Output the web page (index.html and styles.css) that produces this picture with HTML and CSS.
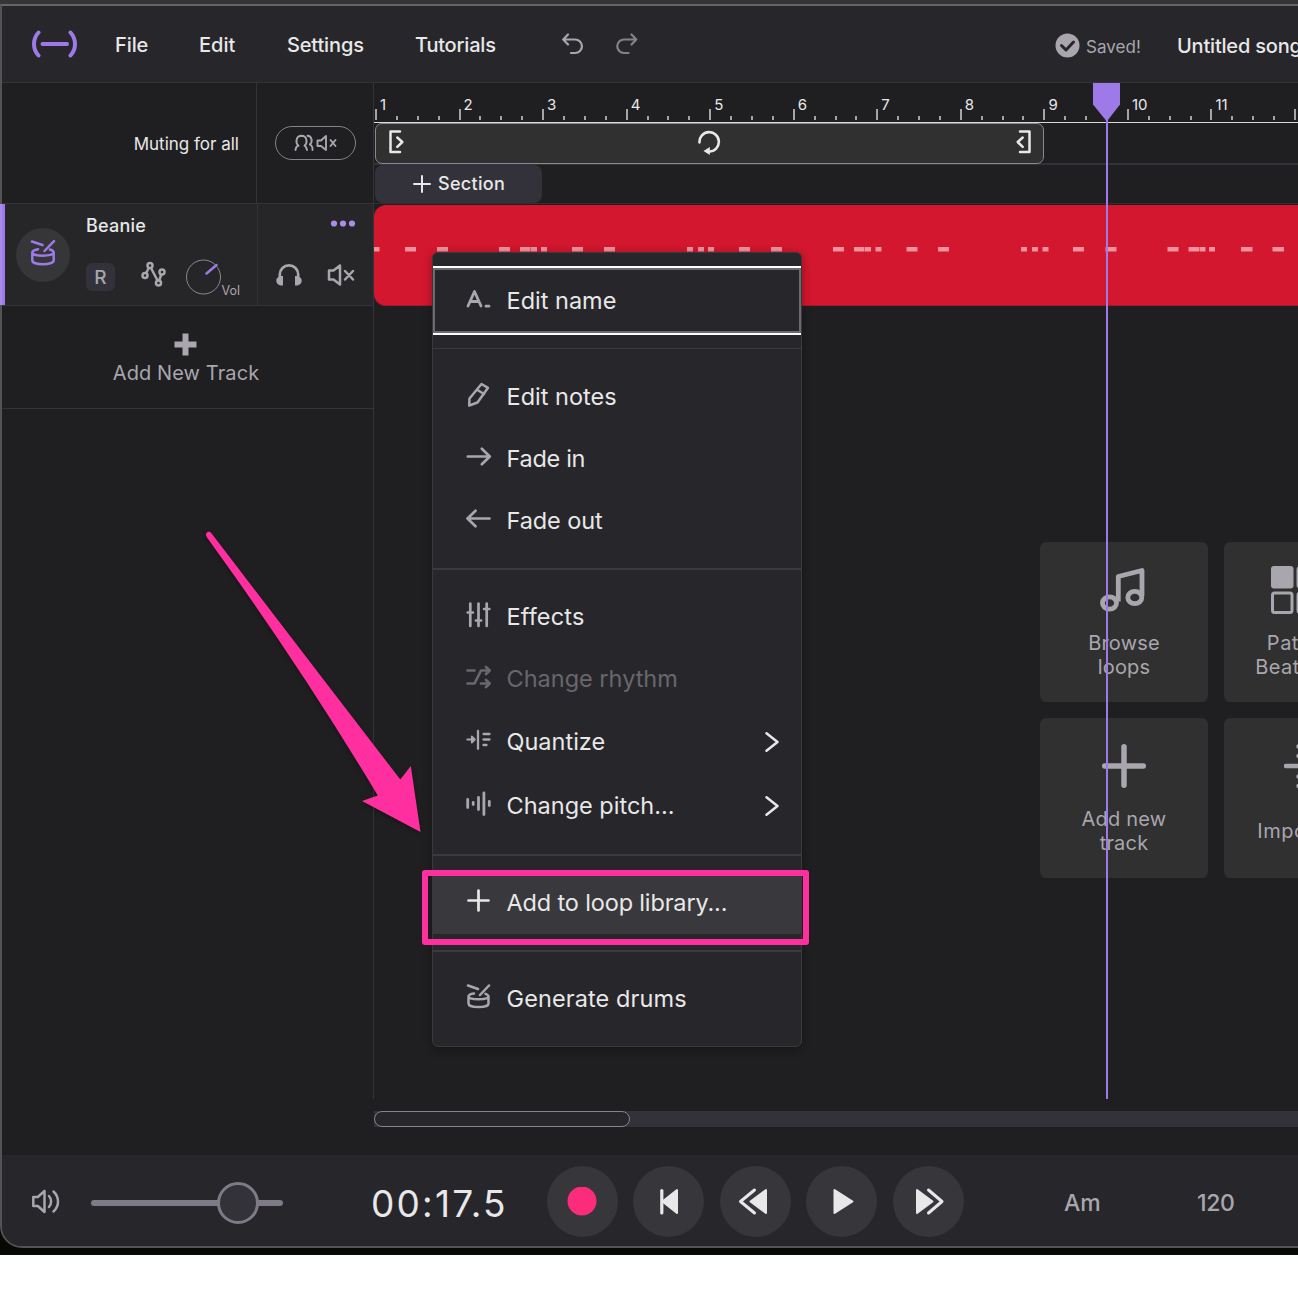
FILE: index.html
```html
<!DOCTYPE html>
<html lang="en">
<head>
<meta charset="utf-8">
<title>Untitled song</title>
<link rel="stylesheet" href="styles.css">
</head>
<body>
<div class="screen">
  <div class="window">
    <header class="topbar">
      <svg class="logo" width="46" height="28" viewBox="0 0 46 28" fill="none" stroke="#9d7ae8" stroke-width="4" stroke-linecap="round"><path d="M7.500 2.500C1.500 9 1.500 19 7.500 25.500M39.500 2.500C45.500 9 45.500 19 39.500 25.500M11.500 14h24.500"/></svg>
      <nav class="menubar">
        <span class="m-file">File</span><span class="m-edit">Edit</span><span class="m-settings">Settings</span><span class="m-tutorials">Tutorials</span>
      </nav>
      <svg class="history" width="76" height="22" viewBox="0 0 76 22" fill="none" stroke-width="2.200" stroke-linecap="round" stroke-linejoin="round"><path stroke="#a9a6ae" d="M6 1.500L1.200 6.500L6 11.500M1.200 6.500H13.200a6.700 6.700 0 0 1 0 13.500H9"/><path stroke="#858389" d="M69.500 1.500L74.300 6.500L69.500 11.500M74.300 6.500H62a6.700 6.700 0 0 0 0 13.500H66.500"/></svg>
      <div class="saved">
        <svg width="25" height="25" viewBox="0 0 25 25"><circle cx="12.500" cy="12.500" r="12" fill="#a9a6ae"/><path d="M6.500 12.500l4.500 4.500l7.500-8" fill="none" stroke="#27262b" stroke-width="3" stroke-linecap="round" stroke-linejoin="round"/></svg>
        <span>Saved!</span>
      </div>
      <span class="song">Untitled song</span>
    </header>

    <main class="workspace">
      <section class="tracks">
        <div class="mute-row">
          <div class="mute-label"><span>Muting for all</span></div>
          <div class="mute-cell">
            <div class="pill">
              <svg width="44" height="18" viewBox="0 0 44 18" fill="none" stroke="#a9a6ae" stroke-width="1.900" stroke-linecap="round" stroke-linejoin="round"><path d="M1.500 16c0-2.500 1-3.500 3-4.300C1 8.500 2 2 7.500 1.800C13 2 14 8.500 10.500 11.700c1.500.6 2 1.800 2.500 4.300M13.500 1.800c4.500.2 5.500 6 2.300 8.700c2 1 3 2.500 2.700 5.500M23.500 6.500v5.500h3.500l5 4v-14l-5 4.500zM36.500 6l5 6M41.500 6l-5 6"/></svg>
            </div>
          </div>
        </div>
        <div class="track">
          <div class="track-main">
            <div class="avatar">
              <svg width="26" height="28" viewBox="0 0 26 28" fill="none" stroke="#9d7ae8" stroke-width="2.500" stroke-linecap="round"><path d="M2 2.500L12.500 6M24 2.200L14.500 12M8 10.200C4.500 10.800 2.300 11.900 2.300 13.500c0 4.200 21.400 4.200 21.400 0C23.700 12.200 22.200 11.200 20 10.500M2.300 13.500v8c0 5 21.400 5 21.400 0v-8"/></svg>
            </div>
            <div class="track-info">
              <span class="track-name">Beanie</span>
              <div class="track-tools">
                <span class="rec">R</span>
                <svg class="auto" width="26" height="28" viewBox="0 0 26 28" fill="none" stroke="#a9a6ae" stroke-width="2.500"><circle cx="4" cy="15.500" r="2.500"/><circle cx="9" cy="5.500" r="2.500"/><circle cx="17.500" cy="23" r="2.500"/><circle cx="21" cy="12" r="2.500"/><path d="M5.200 13l2.600-5.200M10 8l6.500 12.500M18.300 20.500l1.900-6"/></svg>
                <svg class="knob" width="36" height="36" viewBox="0 0 36 36" fill="none"><circle cx="17.500" cy="18" r="17" stroke="#8a8890"/><path d="M20.500 14.500L30.500 6" stroke="#9d7ae8" stroke-width="2.500" stroke-linecap="round"/></svg>
                <span class="vol">Vol</span>
              </div>
            </div>
          </div>
          <div class="track-side">
            <svg class="dots" width="26" height="8" viewBox="0 0 26 8" fill="#a98bea"><circle cx="4" cy="3.500" r="3.100"/><circle cx="13" cy="3.500" r="3.100"/><circle cx="22" cy="3.500" r="3.100"/></svg>
            <div class="side-icons">
              <svg width="26" height="24" viewBox="0 0 26 24"><path d="M3.800 15V11.500a9.200 9.200 0 0 1 18.400 0V15" fill="none" stroke="#a9a6ae" stroke-width="2.700"/><path d="M7 13v9.500C3.500 23 .3 21 .3 17.700C.3 14.500 3.500 13 7 13zM19 13v9.500C22.500 23 25.700 21 25.700 17.700C25.700 14.500 22.500 13 19 13z" fill="#a9a6ae"/></svg>
              <svg width="28" height="24" viewBox="0 0 28 24" fill="none" stroke="#a9a6ae" stroke-width="2.500" stroke-linecap="round" stroke-linejoin="round"><path d="M2 7.500v9h4.500L13 21.500V2.500L6.500 7.500zM18 8l8 8.500M26 8l-8 8.500"/></svg>
            </div>
          </div>
        </div>
        <div class="add-track">
          <svg width="23" height="23" viewBox="0 0 23 23"><path d="M8.500.5h6v8h8v6h-8v8h-6v-8h-8v-6h8z" fill="#a9a6ae"/></svg>
          <span>Add New Track</span>
        </div>
      </section>

      <section class="timeline">
        <div class="ruler">
          <div class="bar"><b>1</b><i></i><i></i><i></i></div>
          <div class="bar"><b>2</b><i></i><i></i><i></i></div>
          <div class="bar"><b>3</b><i></i><i></i><i></i></div>
          <div class="bar"><b>4</b><i></i><i></i><i></i></div>
          <div class="bar"><b>5</b><i></i><i></i><i></i></div>
          <div class="bar"><b>6</b><i></i><i></i><i></i></div>
          <div class="bar"><b>7</b><i></i><i></i><i></i></div>
          <div class="bar"><b>8</b><i></i><i></i><i></i></div>
          <div class="bar"><b>9</b><i></i><i></i><i></i></div>
          <div class="bar"><b>10</b><i></i><i></i><i></i></div>
          <div class="bar"><b>11</b><i></i><i></i><i></i></div>
          <div class="bar"><b></b><i></i><i></i><i></i></div>
        </div>
        <div class="loop-row">
          <div class="loop">
            <svg width="16" height="24" viewBox="0 0 16 24" fill="none" stroke="#e8e8e8" stroke-width="2.500" stroke-linecap="round" stroke-linejoin="round"><path d="M12 1.500H2.500v20.500H12"/><path d="M9.300 7.500l5 4.500l-5 4.800"/></svg>
            <svg width="24" height="26" viewBox="0 0 24 26" fill="none"><path d="M1.500 13.500A9.700 9.700 0 1 1 11.200 22.500" stroke="#e8e8e8" stroke-width="2.600" stroke-linecap="round"/><path d="M5.500 22l6.300-4v8z" fill="#e8e8e8"/></svg>
            <svg width="16" height="24" viewBox="0 0 16 24" fill="none" stroke="#e8e8e8" stroke-width="2.500" stroke-linecap="round" stroke-linejoin="round"><path d="M5 1.500H14.500v20.500H5"/><path d="M7.700 7.500l-5 4.500l5 4.800"/></svg>
          </div>
        </div>
        <div class="section-row">
          <div class="section-btn">
            <svg width="18" height="18" viewBox="0 0 18 18" stroke="#e8e8e8" stroke-width="2" stroke-linecap="round"><path d="M9 1v16M1 9h16"/></svg>
            <span>Section</span>
          </div>
        </div>
        <div class="clip">
          <svg width="924" height="5" viewBox="0 0 924 5" fill="#ef929d"><path d="M0 0h5.500v4.500H0zM31 0h11v4.500H31zM63 0h11v4.500H63zM125 0h11v4.500h-11zM146 0h10.500v4.500h-10.500zM157 0h6v4.500h-6zM167 0h6v4.500h-6zM198 0h11v4.500h-11zM230 0h11v4.500h-11zM313 0h6v4.500h-6zM324 0h6v4.500h-6zM334 0h6v4.500h-6zM365 0h11v4.500h-11zM397 0h11v4.500h-11zM459 0h11v4.500h-11zM480 0h10.500v4.500h-10.500zM491 0h6v4.500h-6zM501.500 0h6v4.500h-6zM532.500 0h11v4.500h-11zM564 0h11v4.500h-11zM647 0h6v4.500h-6zM658 0h6v4.500h-6zM668.500 0h6v4.500h-6zM699 0h11v4.500h-11zM731.500 0h11v4.500h-11zM793.500 0h11v4.500h-11zM814.500 0h10.500v4.500h-10.500zM825.500 0h6v4.500h-6zM835 0h6v4.500h-6zM867 0h11.500v4.500h-11.500zM898.500 0h11.500v4.500h-11.500z"/></svg>
        </div>
        <div class="canvas">
          <div class="cards">
            <div class="card">
              <svg width="48" height="48" viewBox="0 0 48 48" fill="none" stroke="#a9a6ae" stroke-width="4.800" stroke-linejoin="round"><path d="M18.300 35.500V10.500L42 4.500V30"/><ellipse cx="9.500" cy="37" rx="7" ry="6.200"/><ellipse cx="34.800" cy="31.500" rx="7" ry="6.200"/></svg>
              <span>Browse<br>loops</span>
            </div>
            <div class="card">
              <svg width="76" height="48" viewBox="0 0 76 48" fill="none" stroke="#a9a6ae" stroke-width="3"><rect x="2.500" y="1.500" width="19.500" height="19.500" rx="1.500" fill="#a9a6ae"/><rect x="2.500" y="27" width="19.500" height="19.500" rx="2"/><rect x="28" y="1.500" width="19.500" height="19.500" rx="2"/><rect x="28" y="27" width="19.500" height="19.500" rx="2"/><rect x="53.500" y="1.500" width="19.500" height="19.500" rx="2"/><rect x="53.500" y="27" width="19.500" height="19.500" rx="2"/></svg>
              <span class="beats">Patterns<br>Beatmaker</span>
            </div>
            <div class="card">
              <svg width="48" height="48" viewBox="0 0 48 48" stroke="#a9a6ae" stroke-width="5.500" stroke-linecap="round"><path d="M24 4.700v38.600M4.700 24h38.600"/></svg>
              <span>Add new<br>track</span>
            </div>
            <div class="card">
              <svg width="48" height="48" viewBox="0 0 48 48" fill="none" stroke="#a9a6ae" stroke-width="4.500" stroke-linecap="round"><path d="M2 24h29M22 14l10 10l-10 10"/><path d="M14.500 4.500v10M14.500 34.500v10" stroke-dasharray="0 9.500"/><path d="M20 3h23v42H20"/></svg>
              <span class="one-line">Import file</span>
            </div>
          </div>
        </div>
        <div class="scroll-track"><div class="scroll-thumb"></div></div>
      </section>
    </main>

    <footer class="transport">
      <svg class="speaker" width="30" height="28" viewBox="0 0 30 28" fill="none" stroke="#a9a6ae" stroke-width="2.500" stroke-linecap="round" stroke-linejoin="round"><path d="M2.300 10v9h4.500L13.500 25V4L6.800 10zM18 9c2.800 3 2.800 8 0 11M22.500 4.500c6 5.500 6 14.500 0 20"/></svg>
      <div class="slider"><div class="slider-knob"></div></div>
      <span class="time">00:17.5</span>
      <div class="buttons">
        <span class="round"><svg width="30" height="30" viewBox="0 0 30 30"><circle cx="15" cy="14" r="14.500" fill="#fb2c7c"/></svg></span>
        <span class="round"><svg width="30" height="30" viewBox="0 0 30 30" fill="#e8e8e8" stroke="#e8e8e8" stroke-width="2" stroke-linejoin="round" stroke-linecap="round"><path d="M7.800 3.500v22.500" stroke-width="3.200"/><path d="M23 3v23L8.500 14.500z"/></svg></span>
        <span class="round"><svg width="34" height="30" viewBox="0 0 34 30" fill="#e8e8e8" stroke="#e8e8e8" stroke-width="2" stroke-linejoin="round" stroke-linecap="round"><path d="M28 3v23L12.500 14.500z"/><path d="M16.500 3L2.500 14.500L16.500 26" fill="none" stroke-width="3"/></svg></span>
        <span class="round"><svg width="30" height="30" viewBox="0 0 30 30" fill="#e8e8e8" stroke="#e8e8e8" stroke-width="2" stroke-linejoin="round"><path d="M7.500 3v23L25.500 14.500z"/></svg></span>
        <span class="round"><svg width="34" height="30" viewBox="0 0 34 30" fill="#e8e8e8" stroke="#e8e8e8" stroke-width="2" stroke-linejoin="round" stroke-linecap="round"><path d="M6 3v23L21.500 14.500z"/><path d="M17.500 3L31 14.500L17.500 26" fill="none" stroke-width="3"/></svg></span>
      </div>
      <span class="key">Am</span>
      <span class="tempo">120</span>
    </footer>

    <div class="playhead">
      <svg width="27" height="38" viewBox="0 0 27 38"><path d="M0 0h27v21.500L14.500 37.500h-1.500L0 21.500z" fill="#9d7ae8"/></svg>
    </div>

    <div class="menu">
      <div class="group first">
        <div class="item focused"><svg class="ic" viewBox="0 0 26 26" fill="none" stroke="#a9a6ae" stroke-width="2.800" stroke-linecap="round" stroke-linejoin="round"><path d="M2 20L8.500 5.500L15 20M4.500 15.500h8M20 20.200h3"/></svg><span class="t-name">Edit name</span></div>
      </div>
      <div class="group">
        <div class="item"><svg class="ic" viewBox="0 0 26 26" fill="none" stroke="#a9a6ae" stroke-width="2.500" stroke-linecap="round" stroke-linejoin="round"><path d="M15.500 2L22 5.800L11.500 20.500L3.200 23.500L3.500 16.500zM11.500 8l6.500 4"/></svg><span class="t-notes">Edit notes</span></div>
        <div class="item"><svg class="ic" viewBox="0 0 26 26" fill="none" stroke="#a9a6ae" stroke-width="2.700" stroke-linecap="round" stroke-linejoin="round"><path d="M1.800 12.500H23.500M15.800 4.800l8 7.700l-8 7.700"/></svg><span class="t-in">Fade in</span></div>
        <div class="item"><svg class="ic" viewBox="0 0 26 26" fill="none" stroke="#a9a6ae" stroke-width="2.700" stroke-linecap="round" stroke-linejoin="round"><path d="M23.500 12.500H1.800M9.500 4.800l-8 7.700l8 7.700"/></svg><span class="t-out">Fade out</span></div>
      </div>
      <div class="group">
        <div class="item"><svg class="ic" viewBox="0 0 26 26" fill="none" stroke="#a9a6ae" stroke-width="2.700" stroke-linecap="round"><path d="M4.300 1.500v22.500M12.500 1.500v22.500M20.700 1.500v22.500M1.700 10.500h5.200M9.900 18.500h5.200M18.100 7h5.200"/></svg><span class="t-fx">Effects</span></div>
        <div class="item off"><svg class="ic" viewBox="0 0 26 26" fill="none" stroke="#68676d" stroke-width="2.700" stroke-linecap="round" stroke-linejoin="round"><path d="M1.500 6.500h7M1.500 19.500h7L15 6.500h8.500M15 19.500h8.500M20 3l3.700 3.500L20 10M20 16l3.700 3.500L20 23"/></svg><span class="t-rhythm">Change rhythm</span></div>
        <div class="item tall"><svg class="ic" viewBox="0 0 26 26" fill="none" stroke="#a9a6ae" stroke-width="2.300" stroke-linecap="round" stroke-linejoin="round"><path d="M1.200 12.500h6M5.800 9.500l3 3l-3 3z" fill="#a9a6ae" stroke-width="1.800"/><path d="M12 3.800v18M17.500 7h6M17.500 12.500h6M17.500 18h3"/></svg><span class="t-quant">Quantize</span><svg class="chev" width="14" height="22" viewBox="0 0 14 22" fill="none" stroke="#e8e8e8" stroke-width="2.500" stroke-linecap="round" stroke-linejoin="round"><path d="M1.500 2.300L12.500 11L1.500 19.700"/></svg></div>
        <div class="item tall"><svg class="ic" viewBox="0 0 26 26" fill="none" stroke="#a9a6ae" stroke-width="2.800" stroke-linecap="round"><path d="M1.700 8.500v8M7.200 11.500v2M12.500 6.500v12M17.900 2v21.500M23.300 10.500v4"/></svg><span class="t-pitch">Change pitch...</span><svg class="chev" width="14" height="22" viewBox="0 0 14 22" fill="none" stroke="#e8e8e8" stroke-width="2.500" stroke-linecap="round" stroke-linejoin="round"><path d="M1.500 2.300L12.500 11L1.500 19.700"/></svg></div>
      </div>
      <div class="group">
        <div class="item hover"><svg class="ic" viewBox="0 0 26 26" fill="none" stroke="#e8e8e8" stroke-width="2.700" stroke-linecap="round"><path d="M12.500 2.500v20M2.500 12.500h20"/></svg><span class="t-add">Add to loop library...</span></div>
      </div>
      <div class="group">
        <div class="item"><svg class="ic" viewBox="0 0 26 26" fill="none" stroke="#a9a6ae" stroke-width="2.500" stroke-linecap="round"><path d="M2 1.500L12 5M23 1.500L14 11M8 9.500C4.500 10 2.500 11 2.500 12.500c0 3.800 20 3.800 20 0C22.500 11.300 21.300 10.500 19.500 9.800M2.500 12.500v7c0 4.800 20 4.800 20 0v-7"/></svg><span class="t-gen">Generate drums</span></div>
      </div>
    </div>

    <svg class="arrow" width="230" height="310" viewBox="0 0 230 310"><path d="M8 7.500Q5.500 3.500 9 1.800Q11.500 1 13 4Q105.500 125 201.300 249.500L211.800 236L221.500 302L163 271L178.800 265.500Q100.500 135 8 7.500z" fill="#ff2fa0"/></svg>
    <div class="highlight"></div>
  </div>
  <div class="desktop"></div>
</div>
</body>
</html>
```
FILE: styles.css
```css
* { box-sizing: border-box; }
body { margin: 0; background: #fff; font-family: Inter, "Liberation Sans", sans-serif; color: #e8e8e8; overflow: hidden; }
svg { display: block; flex: none; }
span { white-space: nowrap; }

.screen { width: 1298px; height: 1255px; overflow: hidden; background: #070a04; border-top: 4px solid #353535; position: relative; }
.window { position: relative; z-index: 1; width: 1330px; height: 1244px; border: 2px solid #535355; border-top-color: #666; border-radius: 0 0 0 22px; background: #1f1f21; display: flex; flex-direction: column; }
.desktop { height: 7px; background: #070a04; }

.topbar { height: 77px; flex: none; background: #27262b; border-bottom: 1px solid #343438; display: flex; align-items: center; padding-left: 29px; font-size: 20px; font-weight: 500; }
.logo { margin-right: 38px; }
.menubar { display: flex; margin-top: 1px; line-height: 24px; }
.m-file { width: 84px; letter-spacing: -.1px; }
.m-edit { width: 88px; letter-spacing: 0; }
.m-settings { width: 128px; letter-spacing: -.15px; }
.m-tutorials { width: 146.500px; letter-spacing: -.2px; }
.history { margin-top: -1px; }
.saved { width: 122px; margin: 3px 0 0 417.500px; display: flex; align-items: center; gap: 6px; color: #a9a6ae; font-size: 17px; font-weight: 400; }
.saved span { padding-top: 2px; letter-spacing: .05px; }
.song { padding-top: 3px; letter-spacing: -.2px; }

.workspace { height: 1072px; flex: none; display: flex; }
.tracks { width: 372px; height: 1016px; flex: none; border-right: 1px solid #343438; display: flex; flex-direction: column; }
.mute-row { height: 121px; display: flex; border-bottom: 1px solid #343438; }
.mute-label { width: 255px; border-right: 1px solid #343438; padding: 50px 17px 0 0; text-align: right; font-size: 17px; line-height: 22px; }
.mute-cell { flex: 1; display: flex; justify-content: center; padding: 43px 0 0 1px; }
.pill { width: 81px; height: 34px; border: 1px solid #85838b; border-radius: 17px; display: flex; align-items: center; justify-content: center; padding-bottom: 1px; }
.track { height: 102px; display: flex; background: #262628; border-bottom: 1px solid #343438; }
.track-main { width: 256px; display: flex; border-right: 1px solid #343438; border-left: 3px solid #9d7ae8; box-shadow: -2px 0 #a98bea; }
.avatar { width: 54px; height: 54px; margin: 24px 16px 0 11px; flex: none; border-radius: 50%; background: #363638; display: flex; align-items: center; justify-content: center; padding-bottom: 4px; }
.track-info { padding-top: 10px; }
.track-name { display: block; font-size: 18px; line-height: 23px; font-weight: 500; letter-spacing: .2px; }
.track-tools { display: flex; align-items: flex-start; padding-top: 22px; }
.rec { width: 29px; height: 28px; margin-top: 4px; border-radius: 6px; background: #33323a; color: #a9a6ae; font-size: 19px; line-height: 29px; font-weight: 500; text-align: center; }
.auto { margin: 1px 0 0 25.500px; }
.knob { margin: 0 0 0 19px; }
.vol { margin-top: 24px; font-size: 12.500px; line-height: 16px; color: #a9a6ae; }
.track-side { flex: 1; padding: 16px 17px 0 18px; }
.dots { margin-left: auto; }
.side-icons { display: flex; justify-content: space-between; padding: 35px 1px 0 0; }
.add-track { height: 103px; border-bottom: 1px solid #343438; display: flex; flex-direction: column; align-items: center; padding: 27px 4px 0 0; gap: 3px; font-size: 20px; line-height: 28px; color: #a9a6ae; letter-spacing: .1px; }
.add-track span { padding-left: 1px; }

.timeline { width: 924px; flex: none; display: flex; flex-direction: column; overflow: hidden; }
.ruler { height: 40px; flex: none; display: flex; padding-left: 1px; border-bottom: 1px solid #d8d8d8; }
.bar { width: 83.550px; flex: none; display: grid; grid-template-columns: repeat(4, 1fr); align-items: end; padding-bottom: 2px; }
.bar b { height: 24px; font-size: 15px; font-weight: 400; line-height: 18px; padding-left: 5px; background: linear-gradient(#a5a5a8, #a5a5a8) 0 100% / 2px 11px no-repeat; }
.bar i { height: 4px; border-left: 2px solid #a5a5a8; }
.loop-row { height: 42px; flex: none; padding-left: 1px; border-bottom: 2px solid #33323a; }
.loop { width: 669px; height: 41px; border: 1px solid #8a8890; border-radius: 7px; background: #303031; display: flex; align-items: center; justify-content: space-between; padding: 0 12px 3px; }
.section-row { height: 39px; flex: none; border-bottom: 1px solid #303032; padding-left: 1px; }
.section-btn { width: 167px; height: 38px; border-radius: 8px; background: #33323a; display: flex; align-items: center; padding: 0 0 1px 38px; gap: 7px; font-size: 18px; font-weight: 500; letter-spacing: .3px; }
.clip { height: 101px; flex: none; margin-top: 1px; background: #d3172f; border-radius: 12px 0 0 12px; border-bottom: 1px solid #a8182c; padding-top: 42px; }
.canvas { height: 805px; flex: none; padding: 236px 0 0 666px; }
.cards { width: 352px; display: grid; grid-template-columns: 168px 168px; gap: 16px; }
.card { height: 160px; border-radius: 6px; background: #303031; display: flex; flex-direction: column; align-items: center; padding-top: 24px; gap: 17px; font-size: 20px; line-height: 24px; text-align: center; color: #a9a6ae; letter-spacing: .2px; }
.card .one-line { padding-top: 12px; letter-spacing: .5px; }
.card .beats { letter-spacing: .5px; }
.scroll-track { height: 16px; flex: none; background: #33323a; }
.scroll-thumb { width: 256px; height: 16px; border: 1px solid #85838b; border-radius: 8px; background: #27262b; }

.transport { height: 91px; flex: none; background: #27262b; border-radius: 0 0 0 20px; display: flex; align-items: center; padding-left: 29px; color: #e8e8e8; }
.slider { width: 192px; height: 6px; margin: 5px 0 0 30px; border-radius: 3px; background: #7f7b86; display: flex; align-items: center; padding-left: 126px; }
.slider-knob { width: 42px; height: 42px; flex: none; border: 3px solid #7f7b86; border-radius: 50%; background: #333238; }
.time { width: 175.500px; margin: 5px 0 0 88px; font-size: 37px; letter-spacing: 2.200px; }
.buttons { display: flex; gap: 15.500px; margin-top: 2px; }
.round { width: 71px; height: 71px; border-radius: 50%; background: #37363b; display: flex; align-items: center; justify-content: center; }
.key, .tempo { margin-top: 5px; font-size: 23px; font-weight: 500; color: #a9a6ae; }
.key { width: 133px; margin-left: 100.500px; }
.tempo { letter-spacing: -.3px; }

.playhead { position: absolute; left: 1091px; top: 77px; width: 27px; height: 1016px; background: linear-gradient(#9d7ae8, #9d7ae8) 13px 0 / 2px 100% no-repeat; }

.menu { position: absolute; left: 430px; top: 246px; width: 370px; height: 795px; border: 1px solid #39383d; border-radius: 6px; background: #27262b; box-shadow: 0 2px 10px rgba(0, 0, 0, .35); font-size: 23.500px; }
.group { padding: 16px 0; border-bottom: 2px solid #3b3a3f; }
.group.first { padding: 13px 0; border-bottom-width: 1px; }
.group:nth-child(2) { padding-top: 17px; }
.group:last-child { border-bottom: 0; }
.item { height: 62px; display: flex; align-items: center; padding: 0 22px 0 33px; }
.item > span { line-height: 30px; }
.ic { width: 26px; height: 26px; margin: 0 14.500px 4px 0; }
.item.focused { height: 69px; border-top: 2px solid #fff; border-bottom: 2px solid #fff; box-shadow: inset 0 0 0 2px #6b6a6f; }
.item.tall { height: 64px; }
.item.off { color: #68676d; }
.item.hover { background: #39383c; }
.t-in { letter-spacing: -.3px; }
.t-out { letter-spacing: -.1px; }
.t-fx { letter-spacing: .15px; }
.t-add { letter-spacing: -.15px; }
.t-gen { letter-spacing: .1px; }
.chev { margin-left: auto; }

.arrow { position: absolute; left: 197px; top: 524px; filter: drop-shadow(0 2px 2px rgba(0, 0, 0, .3)); }
.highlight { position: absolute; left: 420px; top: 864px; width: 387px; height: 75px; border: 6px solid #ff2fa0; border-radius: 3px; }
```
